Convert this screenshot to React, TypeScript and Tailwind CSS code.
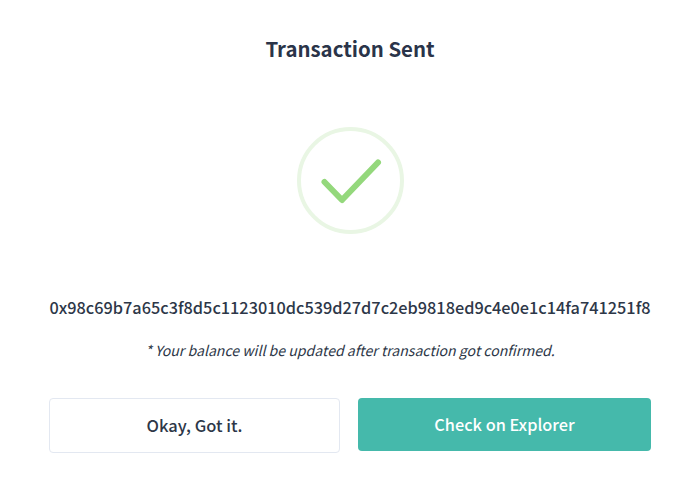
export default function App() {
  return (
    <div className="w-[700px] h-[487px] bg-white flex flex-col items-center overflow-hidden" style={{ fontFamily: '"Noto Sans CJK SC", "Noto Sans", sans-serif' }}>
      <h1 className="mt-[34px] text-[20.4px] leading-[28px] font-bold text-[#2a3449]">Transaction Sent</h1>

      <div className="mt-[65px] w-[107px] h-[107px] rounded-full border-[4px] border-[#e9f6e4] flex items-center justify-center">
        <svg width="64" height="50" viewBox="0 0 64 50" fill="none">
          <path d="M6.5 26 L24 44 L60 6.5" stroke="#94d87c" strokeWidth="6" strokeLinecap="round" strokeLinejoin="round" />
        </svg>
      </div>

      <p className="mt-[63px] text-[16.3px] leading-[20px] font-medium text-[#2d3748]">0x98c69b7a65c3f8d5c1123010dc539d27d7c2eb9818ed9c4e0e1c14fa741251f8</p>
      <p className="mt-[24px] text-[14.1px] leading-[18px] italic text-[#2d3748]">* Your balance will be updated after transaction got confirmed.</p>

      <div className="mt-[39px] w-[602px] flex gap-[18px] items-start">
        <button className="w-[291px] h-[55px] rounded border border-[#e3e8f1] bg-white text-[16.5px] font-medium text-[#2d3748]">Okay, Got it.</button>
        <button className="w-[293px] h-[53px] rounded bg-[#45b9ab] text-[16.3px] font-medium text-white">Check on Explorer</button>
      </div>
    </div>
  );
}
